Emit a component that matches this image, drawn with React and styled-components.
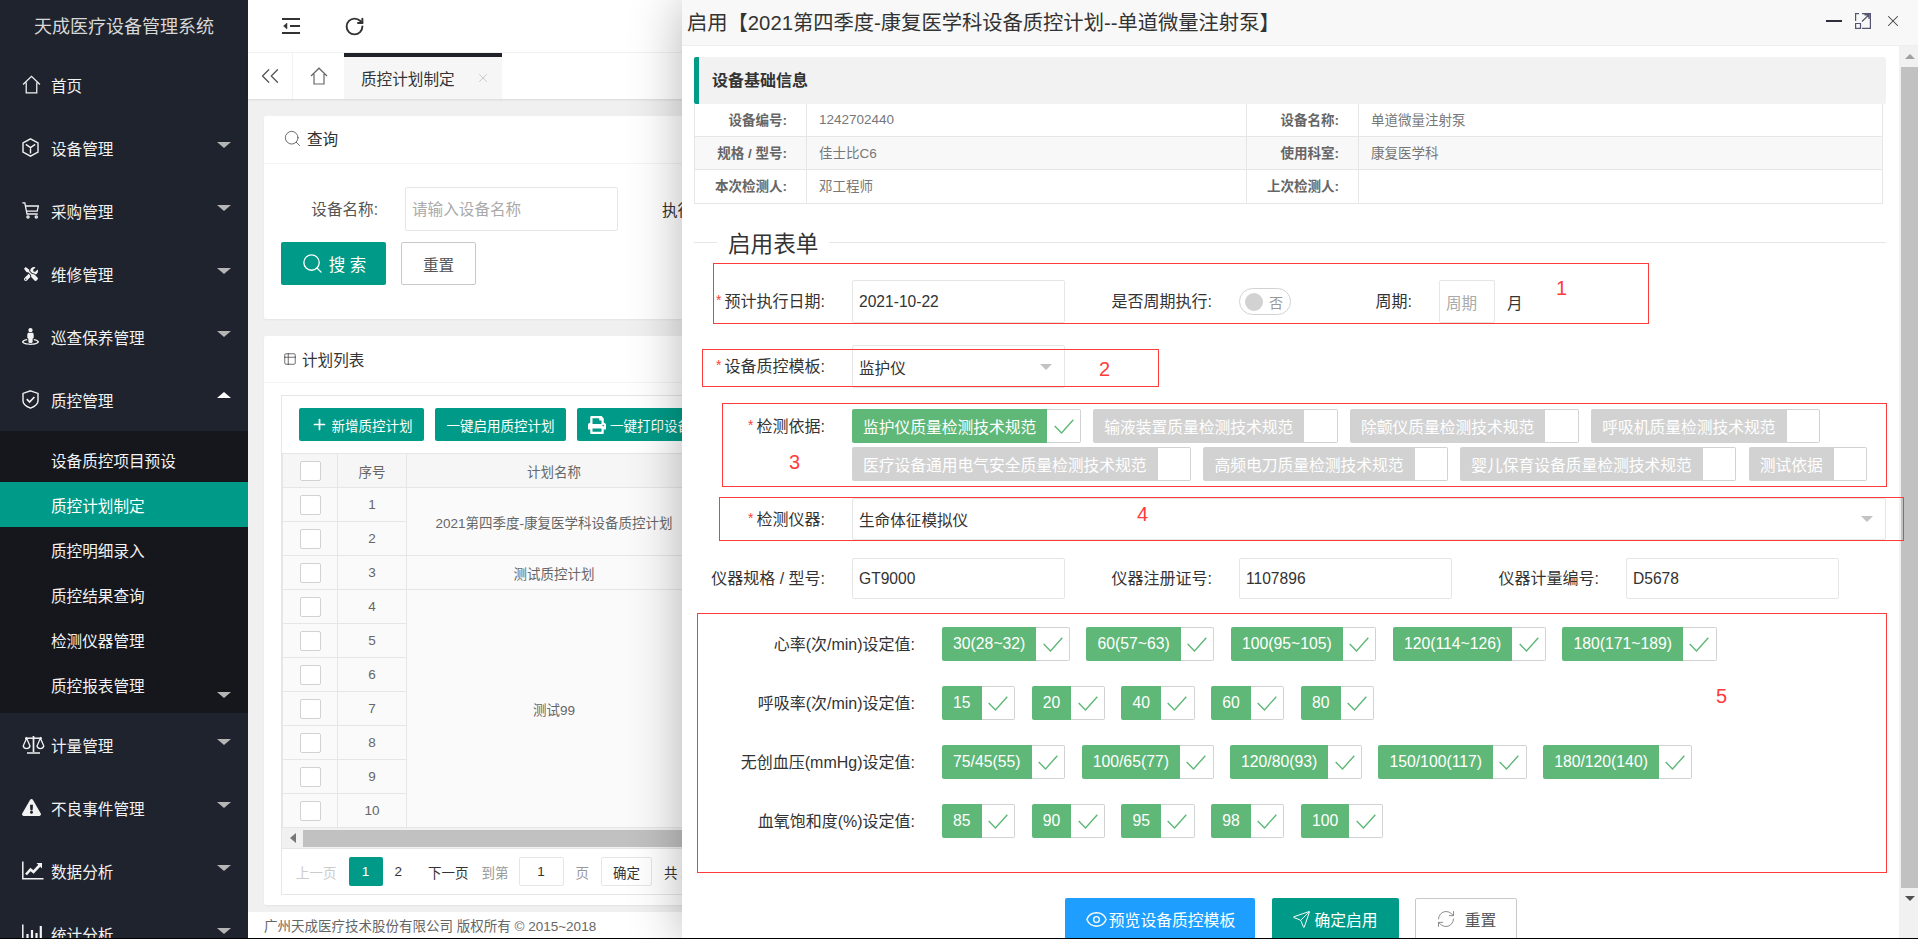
import React from 'react'
import styled, { createGlobalStyle } from 'styled-components'
import { Search, RotateCw, ChevronsLeft, Table2, Eye, Send, RefreshCw, Plus, X } from 'lucide-react'
import { FaTools, FaStreetView, FaExclamationTriangle, FaPrint } from 'react-icons/fa'

const TEAL = '#009b88'
const GREEN = '#5fb878'
const LINE = '#e6e6e6'
const RED = '#ff3b3b'

const GlobalStyle = createGlobalStyle`
  html, body { margin: 0; padding: 0; background: #000; }
  body { font-family: "Liberation Sans", "Noto Sans CJK SC", sans-serif; font-size: 15.6px; color: #333; }
  * { box-sizing: border-box; }
`

const Page = styled.div`
  position: relative;
  display: flex;
  width: 1918px;
  height: 938px;
  overflow: hidden;
  background: #f0f0f0;
`

/* sidebar */
const Sidebar = styled.aside`
  width: 248px;
  flex: none;
  height: 100%;
  overflow: hidden;
  background: #1f232d;
  color: #f2f2f2;
`

const Logo = styled.div`
  height: 53px;
  padding-bottom: 4px;
  display: flex;
  align-items: center;
  justify-content: center;
  font-size: 18px;
  color: #d8d8d8;
`

const NavItem = styled.div`
  height: 63px;
  display: flex;
  align-items: center;
  padding: 0 17px 0 22px;
`

const NavIcon = styled.span`
  width: 29px;
  flex: none;
  display: flex;
  align-items: center;
  padding-left: ${p => p.$indent || 0}px;
`

const Caret = styled.span`
  margin-left: auto;
  margin-top: ${p => p.$mt}px;
  width: 0;
  height: 0;
  border-left: 7px solid transparent;
  border-right: 7px solid transparent;
  ${p => (p.$up ? 'border-bottom: 6px solid #fff;' : 'border-top: 6px solid #b5b5b5;')}
`

const SubMenu = styled.div`
  background: #16171d;
  padding: 6px 0;
`

const SubItem = styled.div`
  height: 45px;
  display: flex;
  align-items: center;
  padding: 0 17px 0 51px;
  background: ${p => (p.$active ? TEAL : 'transparent')};
  color: ${p => (p.$active ? '#fff' : '#f2f2f2')};
`

/* main column */
const Main = styled.main`
  flex: 1;
  min-width: 0;
  display: flex;
  flex-direction: column;
`

const TopBar = styled.div`
  height: 53px;
  flex: none;
  display: flex;
  align-items: center;
  gap: 44px;
  padding-left: 34px;
  background: #fff;
  border-bottom: 1px solid #f2f2f2;
  color: #333;
`

const TabBar = styled.div`
  height: 46px;
  flex: none;
  display: flex;
  background: #fff;
  box-shadow: 0 1px 2px rgba(0, 0, 0, 0.1);
  position: relative;
`

const TabButton = styled.div`
  width: ${p => p.$w}px;
  display: flex;
  align-items: center;
  justify-content: center;
  color: #555;
  border-right: ${p => (p.$line ? '1px solid #f2f2f2' : 'none')};
`

const ActiveTab = styled.div`
  width: 158px;
  display: flex;
  align-items: center;
  justify-content: space-between;
  padding: 0 12px 0 17px;
  background: #f6f6f6;
  border-top: 4px solid #20222a;
  color: #333;
`

const Content = styled.div`
  flex: 1;
  padding: 17px 16px 0;
  display: flex;
  flex-direction: column;
`

const Card = styled.section`
  height: ${p => p.$h}px;
  flex: none;
  margin-bottom: ${p => p.$mb}px;
  background: #fff;
  border-radius: 2px;
  box-shadow: 0 1px 2px rgba(0, 0, 0, 0.05);
`

const CardHead = styled.div`
  height: ${p => p.$h}px;
  padding: 0 0 ${p => p.$pb || 0}px 19px;
  display: flex;
  align-items: center;
  gap: 5px;
  border-bottom: 1px solid #f4f4f4;
  color: #333;
`

const QueryRow = styled.div`
  display: flex;
  align-items: center;
  padding: 23px 0 0 17px;
`

const QueryLabel = styled.span`
  width: 97px;
  padding-bottom: 2px;
  text-align: right;
  color: #555;
  flex: none;
`

const QueryInput = styled.div`
  width: 213px;
  height: 44px;
  margin: 0 44px 0 27px;
  padding: 0 0 3px 6px;
  display: flex;
  align-items: center;
  border: 1px solid ${LINE};
  border-radius: 2px;
  color: #aaa;
  flex: none;
`

const QueryButtons = styled.div`
  display: flex;
  gap: 15px;
  padding: 11px 0 0 17px;
`

const SearchButton = styled.div`
  width: 105px;
  height: 43px;
  display: flex;
  align-items: center;
  justify-content: center;
  gap: 5px;
  background: ${TEAL};
  color: #fff;
  font-size: 16.5px;
  border-radius: 2px;
`

const PlainButton = styled.div`
  width: 75px;
  height: 43px;
  display: flex;
  align-items: center;
  justify-content: center;
  border: 1px solid #c9c9c9;
  border-radius: 2px;
  color: #555;
`

const TableFrame = styled.div`
  margin: 12px 17px 0;
  border: 1px solid ${LINE};
`

const Toolbar = styled.div`
  height: 57px;
  display: flex;
  align-items: center;
  gap: 11px;
  padding-left: 17px;
  white-space: nowrap;
`

const ToolButton = styled.div`
  height: 33px;
  width: ${p => p.$w}px;
  padding-left: ${p => p.$pl || 0}px;
  display: flex;
  align-items: center;
  justify-content: ${p => (p.$pl ? 'flex-start' : 'center')};
  gap: 4px;
  flex: none;
  background: ${TEAL};
  color: #fff;
  font-size: 13.5px;
  border-radius: 2px;
`

const PlanTable = styled.table`
  width: 1400px;
  table-layout: fixed;
  border-collapse: collapse;
  background: #fafafa;
  font-size: 13.5px;
  color: #666;
`

const HeadCell = styled.th`
  width: ${p => p.$w}px;
  height: 34px;
  padding: 0;
  font-weight: normal;
  background: #f6f6f6;
  border: 1px solid ${LINE};
`

const Cell = styled.td`
  height: 34px;
  padding: 0;
  text-align: center;
  border: 1px solid ${LINE};
`

const RowCheck = styled.span`
  display: block;
  width: 21px;
  height: 20px;
  margin: 0 auto;
  background: #fff;
  border: 1px solid #d2d2d2;
  border-radius: 2px;
`

const HScroll = styled.div`
  height: 21px;
  display: flex;
  align-items: center;
  padding-left: 8px;
  background: #f1f1f1;
  border-bottom: 1px solid ${LINE};
`

const HArrow = styled.span`
  width: 0;
  height: 0;
  border-top: 5px solid transparent;
  border-bottom: 5px solid transparent;
  border-right: 6px solid #777;
  margin-right: 7px;
`

const HThumb = styled.span`
  flex: 1;
  height: 17px;
  background: #c1c1c1;
`

const Pager = styled.div`
  height: 45px;
  display: flex;
  align-items: center;
  padding-left: 14px;
  font-size: 13.5px;
  white-space: nowrap;
`

const PagerText = styled.span`
  color: ${p => p.$c};
  margin-left: ${p => p.$ml || 0}px;
`

const PagerCurrent = styled.span`
  width: 34px;
  height: 29px;
  margin-left: 12px;
  display: flex;
  align-items: center;
  justify-content: center;
  background: ${TEAL};
  color: #fff;
  border-radius: 2px;
`

const PagerBox = styled.span`
  width: ${p => p.$w}px;
  height: 29px;
  margin-left: ${p => p.$ml}px;
  display: flex;
  align-items: center;
  justify-content: center;
  border: 1px solid ${LINE};
  border-radius: 2px;
  color: #333;
`

const Footer = styled.footer`
  height: 26px;
  flex: none;
  margin-top: auto;
  display: flex;
  align-items: center;
  padding-left: 16px;
  background: #fff;
  color: #666;
  font-size: 13.5px;
`

/* dialog */
const Dialog = styled.div`
  position: absolute;
  top: 0;
  left: 682px;
  width: 1236px;
  height: 938px;
  display: flex;
  flex-direction: column;
  background: #fff;
  box-shadow: 1px 1px 50px rgba(0, 0, 0, 0.3);
`

const DialogHead = styled.div`
  height: 46px;
  flex: none;
  display: flex;
  align-items: center;
  padding: 0 16px 4px 5px;
  background: #f8f8f8;
  border-bottom: 1px solid #eee;
  font-size: 20.3px;
  color: #333;
`

const HeadTools = styled.div`
  margin-left: auto;
  display: flex;
  align-items: center;
  gap: 13px;
  color: #2e2d3c;
`

const MinLine = styled.span`
  width: 16px;
  height: 2px;
  background: #2e2d3c;
`

const DialogBody = styled.div`
  flex: 1;
  min-height: 0;
  display: flex;
`

const DialogScroll = styled.div`
  flex: 1;
  min-width: 0;
  height: 892px;
  overflow: hidden;
  padding: 11px 13px 0 12px;
`

const VScroll = styled.div`
  width: 19px;
  flex: none;
  display: flex;
  flex-direction: column;
  align-items: flex-end;
  background: #f1f1f1;
`

const VArrow = styled.span`
  width: 17px;
  height: 21px;
  display: flex;
  align-items: center;
  justify-content: center;
  &::before {
    content: '';
    border-left: 5px solid transparent;
    border-right: 5px solid transparent;
    ${p => (p.$up ? 'border-bottom: 5px solid #a0a0a0;' : 'border-top: 5px solid #505050;')}
  }
`

const VThumb = styled.span`
  width: 17px;
  height: 821px;
  background: #c1c1c1;
`

const SectionHead = styled.div`
  height: 47px;
  padding: 0 0 4px 13px;
  display: flex;
  align-items: center;
  background: #f2f2f2;
  border-left: 5px solid ${TEAL};
  border-radius: 2px;
  font-size: 16px;
  font-weight: bold;
  color: #333;
`

const InfoGrid = styled.div`
  width: 1189px;
  display: grid;
  grid-template-columns: 112px 440px 112px 1fr;
  grid-auto-rows: 33px;
  border: 1px solid ${LINE};
  border-top: none;
  font-size: 13.5px;
`

const InfoLabel = styled.div`
  display: flex;
  align-items: center;
  justify-content: flex-end;
  padding: 0 19px 2px 0;
  font-weight: bold;
  color: #666;
  background: ${p => (p.$alt ? '#f8f8f8' : '#fff')};
  border-right: 1px solid ${LINE};
  border-bottom: 1px solid ${p => (p.$last ? 'transparent' : LINE)};
`

const InfoValue = styled.div`
  display: flex;
  align-items: center;
  padding: 0 0 2px 12px;
  color: #777;
  background: ${p => (p.$alt ? '#f8f8f8' : '#fff')};
  border-right: 1px solid ${p => (p.$end ? 'transparent' : LINE)};
  border-bottom: 1px solid ${p => (p.$last ? 'transparent' : LINE)};
`

const Legend = styled.div`
  height: 30px;
  margin-top: 23px;
  display: flex;
  align-items: center;
  font-size: 22.6px;
  color: #333;
  &::before {
    content: '';
    width: 23px;
    height: 1px;
    margin-right: 11px;
    background: ${LINE};
  }
  &::after {
    content: '';
    flex: 1;
    height: 1px;
    margin-left: 11px;
    background: ${LINE};
  }
`

const FormRow = styled.div`
  display: flex;
  align-items: ${p => (p.$top ? 'flex-start' : 'center')};
  margin-top: ${p => p.$mt}px;
`

const Label = styled.label`
  width: ${p => p.$w || 131}px;
  flex: none;
  margin-right: 27px;
  padding: ${p => p.$pt || 0}px 0 3px;
  text-align: right;
  white-space: nowrap;
  font-size: 16px;
  color: #333;
`

const Star = styled.span`
  color: ${RED};
  font-size: 14px;
  margin-right: 3px;
  vertical-align: 2px;
`

const Field = styled.div`
  width: ${p => p.$w || 213}px;
  height: ${p => p.$h}px;
  flex: ${p => (p.$grow ? 1 : 'none')};
  margin-right: ${p => p.$mr || 0}px;
  display: flex;
  align-items: center;
  justify-content: space-between;
  padding: 0 12px 0 6px;
  border: 1px solid ${LINE};
  border-radius: 2px;
  color: ${p => (p.$muted ? '#aaa' : '#333')};
  white-space: nowrap;
`

const SelectArrow = styled.span`
  width: 0;
  height: 0;
  border-left: 6px solid transparent;
  border-right: 6px solid transparent;
  border-top: 6px solid #c2c2c2;
`

const Switch = styled.div`
  width: 52px;
  height: 27px;
  flex: none;
  display: flex;
  align-items: center;
  gap: 6px;
  padding-left: 5px;
  border: 1px solid #d2d2d2;
  border-radius: 14px;
  color: #999;
  font-size: 14px;
  &::before {
    content: '';
    width: 18px;
    height: 18px;
    border-radius: 50%;
    background: #d2d2d2;
  }
`

const Unit = styled.span`
  margin-left: 12px;
`

const ChipWrap = styled.div`
  width: 1034px;
  display: flex;
  flex-wrap: wrap;
  gap: 4px 12.2px;
`

const ChipRow = styled.div`
  display: flex;
  gap: 16.5px;
`

const Chip = styled.div`
  display: flex;
  height: 34px;
  white-space: nowrap;
  font-size: 15.75px;
`

const ChipText = styled.span`
  display: flex;
  align-items: center;
  padding: 0 11.1px;
  color: #fff;
  background: ${p => (p.$off ? '#d2d2d2' : GREEN)};
  border-radius: 2px 0 0 2px;
`

const ChipTick = styled.span`
  width: 33.5px;
  display: flex;
  align-items: center;
  justify-content: center;
  border: 1px solid #d2d2d2;
  border-left: none;
  border-radius: 0 2px 2px 0;
`

const FormActions = styled.div`
  display: flex;
  gap: 16.5px;
  margin: 60px 0 0 371px;
`

const ActionButton = styled.div`
  width: ${p => p.$w}px;
  height: 42px;
  flex: none;
  display: flex;
  align-items: center;
  justify-content: center;
  gap: ${p => p.$gap}px;
  border-radius: 2px;
  font-size: 15.8px;
  background: ${p => p.$bg};
  color: ${p => p.$color || '#fff'};
  border: ${p => (p.$outlined ? '1px solid #c9c9c9' : 'none')};
`

/* red review marks drawn on top of the dialog */
const Mark = styled.div`
  position: absolute;
  left: ${p => p.$x}px;
  top: ${p => p.$y}px;
  width: ${p => p.$w}px;
  height: ${p => p.$h}px;
  border: 1px solid ${RED};
  pointer-events: none;
`

const MarkNumber = styled.span`
  position: absolute;
  left: ${p => p.$x}px;
  top: ${p => p.$y}px;
  font-size: 20px;
  line-height: 20px;
  color: ${RED};
`

const Tick = () => (
  <svg width="20" height="15" viewBox="0 0 20 15" fill="none" stroke={GREEN} strokeWidth="1.4">
    <polyline points="0.7,7 7.5,14 19.3,0.7" />
  </svg>
)

const HomeIcon = ({ size = 18, color = 'currentColor' }) => (
  <svg width={size} height={size} viewBox="0 0 18 18" fill="none" stroke={color} strokeWidth="1.2">
    <path d="M1 9 L9 1.2 L17 9 M4 7 V17 H14 V7" />
  </svg>
)

const CubeIcon = () => (
  <svg width="17" height="19" viewBox="0 0 17 19" fill="none" stroke="currentColor" strokeWidth="1.4">
    <path d="M8.5 .8 L16 5 V14 L8.5 18.2 L1 14 V5 Z M3.8 6.4 L8.5 9.6 L13.2 6.4 M8.5 9.6 V15.5" />
  </svg>
)

const CartIcon = () => (
  <svg width="17" height="17" viewBox="0 0 17 17" fill="none" stroke="currentColor" strokeWidth="1.3">
    <path d="M.3 .8 H2.8 L5 12 H15.8 M3.6 4 H16.4 L15.2 9.2 H4.6" />
    <circle cx="6" cy="15" r="1.1" />
    <circle cx="14.3" cy="15" r="1.1" />
  </svg>
)

const ShieldIcon = () => (
  <svg width="17" height="19" viewBox="0 0 17 19" fill="none" stroke="currentColor" strokeWidth="1.4">
    <path d="M8.5 .8 L16 3.4 V11 C16 14.5 11.5 17 8.5 18.2 C5.5 17 1 14.5 1 11 V3.4 Z" />
    <path d="M4.8 9.2 L7.6 12 L12.4 7" strokeWidth="1.7" />
  </svg>
)

const ScaleIcon = () => (
  <svg width="23" height="19" viewBox="0 0 23 19" fill="none" stroke="currentColor" strokeWidth="1.3">
    <path d="M11.5 1 V17 M5 18 H18" strokeWidth="1.7" />
    <path d="M3 3.2 H20" strokeWidth="1.5" />
    <path d="M4.6 3.2 L1.2 11 C2 14.4 7.2 14.4 8 11 Z M18.4 3.2 L15 11 C15.8 14.4 21 14.4 21.8 11 Z" />
  </svg>
)

const TrendIcon = () => (
  <svg width="22" height="19" viewBox="0 0 22 19" fill="none" stroke="currentColor">
    <path d="M.8 .5 V17.8 H21.5" strokeWidth="1.5" />
    <path d="M4 13.5 L8.5 8.5 L11.5 11 L17.5 4.5" strokeWidth="2.6" />
    <path d="M14.5 2 H20 V7.5 Z" fill="currentColor" stroke="none" />
  </svg>
)

const BarsIcon = () => (
  <svg width="21" height="19" viewBox="0 0 21 19" fill="none" stroke="currentColor">
    <path d="M.8 .5 V17.8 H20.5" strokeWidth="1.5" />
    <path d="M5.5 17 V10 M10 17 V6 M14.5 17 V9 M18.8 17 V2" strokeWidth="2.2" />
  </svg>
)

const OutdentIcon = () => (
  <svg width="18" height="16" viewBox="0 0 18 16" fill="none" stroke="#333">
    <path d="M0 1 H18 M8 8 H18 M0 15 H18" strokeWidth="2" />
    <path d="M5 5 L1.5 8 L5 11 Z" fill="#333" strokeWidth="0.5" />
  </svg>
)

const MaxIcon = () => (
  <svg width="16" height="16" viewBox="0 0 16 16" fill="none" stroke="#555570" strokeWidth="1.2">
    <path d="M7 .6 H15.4 V15.4 H7 M.6 8 V.6 H4 M.6 10.5 H5.5 V15.4 H.6 Z M7 8.5 L14 1.8 M9.5 1.8 H14 V6" />
  </svg>
)

const Nav = ({ icon, text, caret, up, indent }) => (
  <NavItem>
    <NavIcon $indent={indent}>{icon}</NavIcon>
    {text}
    {caret && <Caret $up={up} $mt={up ? -10 : -6} />}
  </NavItem>
)

const infoRows = [
  ['设备编号:', '1242702440', '设备名称:', '单道微量注射泵'],
  ['规格 / 型号:', '佳士比C6', '使用科室:', '康复医学科'],
  ['本次检测人:', '邓工程师', '上次检测人:', ''],
]

const standards = [
  ['监护仪质量检测技术规范', true],
  ['输液装置质量检测技术规范'],
  ['除颤仪质量检测技术规范'],
  ['呼吸机质量检测技术规范'],
  ['医疗设备通用电气安全质量检测技术规范'],
  ['高频电刀质量检测技术规范'],
  ['婴儿保育设备质量检测技术规范'],
  ['测试依据'],
]

const settings = [
  ['心率(次/min)设定值:', ['30(28~32)', '60(57~63)', '100(95~105)', '120(114~126)', '180(171~189)'], 0],
  ['呼吸率(次/min)设定值:', ['15', '20', '40', '60', '80'], 25],
  ['无创血压(mmHg)设定值:', ['75/45(55)', '100/65(77)', '120/80(93)', '150/100(117)', '180/120(140)'], 25],
  ['血氧饱和度(%)设定值:', ['85', '90', '95', '98', '100'], 25],
]

const marks = [
  { x: 31, y: 263, w: 936, h: 61 },
  { x: 20, y: 349, w: 457, h: 38 },
  { x: 40, y: 403, w: 1165, h: 84 },
  { x: 37, y: 497, w: 1185, h: 44 },
  { x: 15, y: 613, w: 1190, h: 260 },
]

const markNumbers = [
  { n: 1, x: 874, y: 278 },
  { n: 2, x: 417, y: 359 },
  { n: 3, x: 107, y: 452 },
  { n: 4, x: 455, y: 504 },
  { n: 5, x: 1034, y: 686 },
]

const App = () => {
  return (
    <Page>
      <GlobalStyle />
      <Sidebar>
        <Logo>天成医疗设备管理系统</Logo>
        <Nav icon={<HomeIcon size={19} />} text="首页" />
        <Nav icon={<CubeIcon />} text="设备管理" caret />
        <Nav icon={<CartIcon />} text="采购管理" caret />
        <Nav icon={<FaTools size={14} />} indent={2} text="维修管理" caret />
        <Nav icon={<FaStreetView size={17} />} text="巡查保养管理" caret />
        <Nav icon={<ShieldIcon />} text="质控管理" caret up />
        <SubMenu>
          <SubItem>设备质控项目预设</SubItem>
          <SubItem $active>质控计划制定</SubItem>
          <SubItem>质控明细录入</SubItem>
          <SubItem>质控结果查询</SubItem>
          <SubItem>检测仪器管理</SubItem>
          <SubItem>质控报表管理<Caret $mt={20} /></SubItem>
        </SubMenu>
        <Nav icon={<ScaleIcon />} text="计量管理" caret />
        <Nav icon={<FaExclamationTriangle size={19} />} text="不良事件管理" caret />
        <Nav icon={<TrendIcon />} text="数据分析" caret />
        <Nav icon={<BarsIcon />} text="统计分析" caret />
      </Sidebar>

      <Main>
        <TopBar>
          <OutdentIcon />
          <RotateCw size={21} strokeWidth={2.2} />
        </TopBar>
        <TabBar>
          <TabButton $w={45} $line><ChevronsLeft size={30} strokeWidth={1} /></TabButton>
          <TabButton $w={51}><HomeIcon size={18} color="#666" /></TabButton>
          <ActiveTab>
            质控计划制定
            <X size={14} color="#bbb" strokeWidth={1.3} />
          </ActiveTab>
        </TabBar>
        <Content>
          <Card $h={203} $mb={17}>
            <CardHead $h={48} $pb={3}>
              <Search size={19} strokeWidth={1.1} color="#555" />
              查询
            </CardHead>
            <QueryRow>
              <QueryLabel>设备名称:</QueryLabel>
              <QueryInput>请输入设备名称</QueryInput>
              <span>执行日期:</span>
            </QueryRow>
            <QueryButtons>
              <SearchButton>
                <Search size={23} strokeWidth={1.4} />
                搜 索
              </SearchButton>
              <PlainButton>重置</PlainButton>
            </QueryButtons>
          </Card>

          <Card $h={569} $mb={0}>
            <CardHead $h={47}>
              <Table2 size={14} strokeWidth={1.3} color="#444" />
              计划列表
            </CardHead>
            <TableFrame>
              <Toolbar>
                <ToolButton $w={125}><Plus size={17} strokeWidth={2.4} />新增质控计划</ToolButton>
                <ToolButton $w={131}>一键启用质控计划</ToolButton>
                <ToolButton $w={160} $pl={11}><FaPrint size={18} />一键打印设备清单</ToolButton>
              </Toolbar>
              <PlanTable>
                <thead>
                  <tr>
                    <HeadCell $w={55}><RowCheck /></HeadCell>
                    <HeadCell $w={69}>序号</HeadCell>
                    <HeadCell $w={295}>计划名称</HeadCell>
                    <HeadCell />
                  </tr>
                </thead>
                <tbody>
                  {[1, 2, 3, 4, 5, 6, 7, 8, 9, 10].map(n => (
                    <tr key={n}>
                      <Cell><RowCheck /></Cell>
                      <Cell>{n}</Cell>
                      {n === 1 && <Cell rowSpan={2}>2021第四季度-康复医学科设备质控计划</Cell>}
                      {n === 3 && <Cell>测试质控计划</Cell>}
                      {n === 4 && <Cell rowSpan={7}>测试99</Cell>}
                      <Cell />
                    </tr>
                  ))}
                </tbody>
              </PlanTable>
              <HScroll><HArrow /><HThumb /></HScroll>
              <Pager>
                <PagerText $c="#ccc">上一页</PagerText>
                <PagerCurrent>1</PagerCurrent>
                <PagerText $c="#333" $ml={12}>2</PagerText>
                <PagerText $c="#333" $ml={26}>下一页</PagerText>
                <PagerText $c="#999" $ml={13}>到第</PagerText>
                <PagerBox $w={45} $ml={10}>1</PagerBox>
                <PagerText $c="#999" $ml={12}>页</PagerText>
                <PagerBox $w={51} $ml={12}>确定</PagerBox>
                <PagerText $c="#333" $ml={12}>共 2 页</PagerText>
              </Pager>
            </TableFrame>
          </Card>
        </Content>
        <Footer>广州天成医疗技术股份有限公司 版权所有 © 2015~2018</Footer>
      </Main>

      <Dialog>
        <DialogHead>
          启用【2021第四季度-康复医学科设备质控计划--单道微量注射泵】
          <HeadTools>
            <MinLine />
            <MaxIcon />
            <X size={18} strokeWidth={1.4} color="#444" />
          </HeadTools>
        </DialogHead>
        <DialogBody>
          <DialogScroll>
            <SectionHead>设备基础信息</SectionHead>
            <InfoGrid>
              {infoRows.map((row, i) => (
                <React.Fragment key={row[0]}>
                  <InfoLabel $alt={i === 1} $last={i === 2}>{row[0]}</InfoLabel>
                  <InfoValue $alt={i === 1} $last={i === 2}>{row[1]}</InfoValue>
                  <InfoLabel $alt={i === 1} $last={i === 2}>{row[2]}</InfoLabel>
                  <InfoValue $alt={i === 1} $last={i === 2} $end>{row[3]}</InfoValue>
                </React.Fragment>
              ))}
            </InfoGrid>

            <Legend>启用表单</Legend>

            <FormRow $mt={23}>
              <Label><Star>*</Star>预计执行日期:</Label>
              <Field $h={43}>2021-10-22</Field>
              <Label $w={147}>是否周期执行:</Label>
              <Switch>否</Switch>
              <Label $w={121}>周期:</Label>
              <Field $w={56} $h={43} $muted>周期</Field>
              <Unit>月</Unit>
            </FormRow>

            <FormRow $mt={22}>
              <Label><Star>*</Star>设备质控模板:</Label>
              <Field $h={43}>监护仪<SelectArrow /></Field>
            </FormRow>

            <FormRow $mt={21} $top>
              <Label $pt={4}><Star>*</Star>检测依据:</Label>
              <ChipWrap>
                {standards.map(([text, on]) => (
                  <Chip key={text}>
                    <ChipText $off={!on}>{text}</ChipText>
                    <ChipTick>{on && <Tick />}</ChipTick>
                  </Chip>
                ))}
              </ChipWrap>
            </FormRow>

            <FormRow $mt={17}>
              <Label><Star>*</Star>检测仪器:</Label>
              <Field $h={42} $grow>生命体征模拟仪<SelectArrow /></Field>
            </FormRow>

            <FormRow $mt={18}>
              <Label>仪器规格 / 型号:</Label>
              <Field $h={41} $mr={16}>GT9000</Field>
              <Label>仪器注册证号:</Label>
              <Field $h={41} $mr={16}>1107896</Field>
              <Label>仪器计量编号:</Label>
              <Field $h={41}>D5678</Field>
            </FormRow>

            {settings.map(([label, values, gap], i) => (
              <FormRow key={label} $mt={i === 0 ? 28 : gap}>
                <Label $w={221}>{label}</Label>
                <ChipRow>
                  {values.map(v => (
                    <Chip key={v}>
                      <ChipText>{v}</ChipText>
                      <ChipTick><Tick /></ChipTick>
                    </Chip>
                  ))}
                </ChipRow>
              </FormRow>
            ))}

            <FormActions>
              <ActionButton $w={190} $bg="#1e9fff" $gap={1}><Eye size={23} strokeWidth={1.4} />预览设备质控模板</ActionButton>
              <ActionButton $w={127} $bg={TEAL} $gap={3}><Send size={19} strokeWidth={1.2} />确定启用</ActionButton>
              <ActionButton $w={102} $bg="#fff" $color="#555" $gap={9} $outlined>
                <RefreshCw size={20} strokeWidth={1} color="#777" />重置
              </ActionButton>
            </FormActions>
          </DialogScroll>
          <VScroll>
            <VArrow $up />
            <VThumb />
            <VArrow />
          </VScroll>
        </DialogBody>

        {marks.map(m => (
          <Mark key={m.y} $x={m.x} $y={m.y} $w={m.w} $h={m.h} />
        ))}
        {markNumbers.map(m => (
          <MarkNumber key={m.n} $x={m.x} $y={m.y}>{m.n}</MarkNumber>
        ))}
      </Dialog>
    </Page>
  )
}

export default App
